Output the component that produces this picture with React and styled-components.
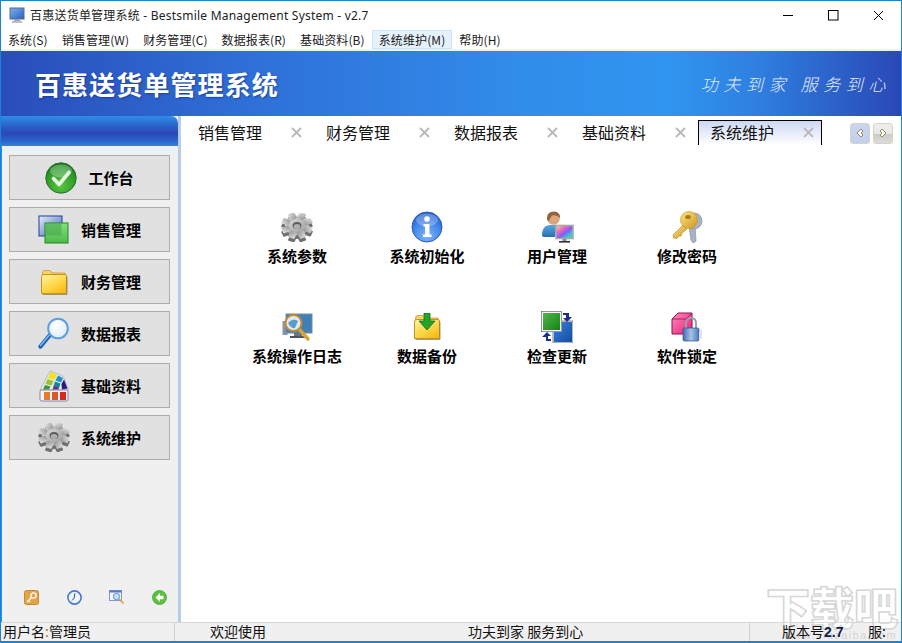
import React from 'react';
import styled, { createGlobalStyle } from 'styled-components';

const CJK = `"Noto Sans CJK SC", "Liberation Sans", sans-serif`;

const Global = createGlobalStyle`
  html, body { margin: 0; padding: 0; background: #fff; }
  body { font-family: ${CJK}; }
  * { box-sizing: border-box; }
`;

const Frame = styled.div`
  position: relative;
  width: 902px;
  height: 643px;
  display: flex;
  flex-direction: column;
  overflow: hidden;
  border: 1px solid #1883d7;
  border-bottom-width: 2px;
  background: #fff;
  color: #000;
`;

const TitleBar = styled.div`
  height: 29px;
  flex: none;
  display: flex;
  align-items: center;
  padding: 0 0 1px 8px;
`;

const TitleText = styled.div`
  margin-left: 4px;
  font-family: "Noto Sans", ${CJK};
  font-size: 12px;
  letter-spacing: 0.22px;
  color: #222;
  white-space: nowrap;
`;

const WinButtons = styled.div`
  margin-left: auto;
  display: flex;
  height: 29px;
`;

const WinButton = styled.div`
  width: 45px;
  display: flex;
  align-items: center;
  justify-content: center;
`;

const MenuBar = styled.div`
  height: 21px;
  flex: none;
  display: flex;
  align-items: center;
  border-bottom: 2px solid #f0f0f0;
`;

const MenuItem = styled.div`
  height: 19px;
  padding: 0 6px;
  font-size: 12px;
  line-height: 18px;
  letter-spacing: 0.1px;
  color: #1a1a1a;
  white-space: nowrap;
  border: 1px solid ${p => (p.$active ? '#cce4f7' : 'transparent')};
  background: ${p => (p.$active ? '#e5f1fb' : 'transparent')};
`;

const Banner = styled.div`
  height: 65px;
  flex: none;
  display: flex;
  align-items: center;
  justify-content: space-between;
  padding: 0 10px 0 34px;
  background: linear-gradient(to right, #2a4db9 0%, #2f70d8 28%, #318cea 58%, #3095f0 74%, #2f7fe0 84%, #2a48b6 100%);
`;

const BannerTitle = styled.div`
  font-size: 26px;
  font-weight: 700;
  letter-spacing: 1.1px;
  color: #fff;
  white-space: nowrap;
  text-shadow: 1px 1px 2px rgba(20, 40, 120, 0.6);
`;

const Slogan = styled.div`
  font-size: 17px;
  font-weight: 300;
  font-style: italic;
  letter-spacing: 5.6px;
  color: #e4edfb;
  white-space: nowrap;
`;

const Body = styled.div`
  flex: 1;
  min-height: 0;
  display: flex;
`;

const Sidebar = styled.div`
  width: 180px;
  flex: none;
  display: flex;
  flex-direction: column;
  background: #f0f0f0;
  border-right: 3px solid #b5cdec;
  border-left: 1px solid #2e8ee6;
`;

const SideHead = styled.div`
  height: 30px;
  flex: none;
  margin-left: -1px;
  border-top-right-radius: 7px;
  background: linear-gradient(to bottom, #2f8de9 0%, #2b5cc4 38%, #2a48b6 58%, #2b62c9 82%, #2f83e3 100%);
`;

const SideButtons = styled.div`
  display: flex;
  flex-direction: column;
  gap: 7px;
  padding: 9px 8px 0 7px;
`;

const SideButton = styled.div`
  height: 45px;
  display: flex;
  align-items: center;
  justify-content: center;
  gap: 11px;
  border: 1px solid #adadad;
  background: #e1e1e1;
  font-size: 15px;
  font-weight: 700;
  color: #000;
`;

const SideIcon = styled.span`
  width: 32px;
  display: flex;
  justify-content: center;
`;

const SideFoot = styled.div`
  margin-top: auto;
  height: 32px;
  padding: 0 0 17px 8px;
  display: grid;
  grid-template-columns: repeat(4, 42.7px);
  justify-items: center;
  align-items: center;
`;

const Main = styled.div`
  flex: 1;
  min-width: 0;
  display: flex;
  flex-direction: column;
`;

const TabStrip = styled.div`
  height: 29px;
  flex: none;
  display: flex;
  align-items: flex-end;
  padding-left: 5px;
`;

const Tab = styled.div`
  width: ${p => p.$w}px;
  height: 25px;
  display: flex;
  align-items: center;
  padding: 0 0 2px 11px;
  font-size: 16px;
  line-height: 22px;
  color: #111;
  border: 1px solid ${p => (p.$active ? '#000' : 'transparent')};
  border-bottom: 0;
  background: ${p => (p.$active ? 'linear-gradient(to bottom, #ccd8f2 0%, #e6ecf9 50%, #fff 100%)' : 'transparent')};
`;

const TabClose = styled.span`
  margin-left: auto;
  margin-right: ${p => p.$mr}px;
  display: flex;
`;

const Scrollers = styled.div`
  margin-left: 28px;
  display: flex;
  gap: 3px;
  align-self: center;
  margin-top: 5px;
`;

const Scroller = styled.div`
  width: 20px;
  height: 21px;
  display: flex;
  align-items: center;
  justify-content: center;
  border: 1px solid #d8d4c0;
  border-radius: 3px;
  background: ${p => (p.$on
    ? 'linear-gradient(to bottom, #c9d6f2, #c2d0ef)'
    : 'linear-gradient(to bottom, #eeeeee 0%, #e8e8e8 50%, #c9c9c9 52%, #dcdcdc 100%)')};
`;

const IconGrid = styled.div`
  display: grid;
  grid-template-columns: repeat(4, 130px);
  grid-auto-rows: 100px;
  padding: 64px 0 0 51px;
`;

const Launcher = styled.div`
  display: flex;
  flex-direction: column;
  align-items: center;
`;

const LauncherIcon = styled.div`
  width: 36px;
  height: 36px;
  display: flex;
  align-items: center;
  justify-content: center;
`;

const LauncherLabel = styled.div`
  margin-top: 1px;
  font-size: 15px;
  line-height: 20px;
  font-weight: 700;
  white-space: nowrap;
`;

const StatusBar = styled.div`
  position: relative;
  z-index: 2;
  height: 19px;
  flex: none;
  display: flex;
  align-items: center;
  background: transparent;
  border-top: 1px solid #d7d7d7;
  font-size: 14px;
  line-height: 17px;
  color: #111;
  white-space: nowrap;
`;

const StatusCell = styled.div`
  width: ${p => p.$w}px;
  flex: none;
  height: 18px;
  padding-left: ${p => p.$pl}px;
  border-right: ${p => (p.$split ? '1px solid #d0d0d0' : '0')};
`;

const StatusBack = styled.div`
  position: absolute;
  left: 0;
  right: 0;
  bottom: 0;
  height: 19px;
  background: #f0f0f0;
`;

const Colon = styled.span`
  color: #d2691e;
`;

const Version = styled.b`
  font-family: "Liberation Sans", sans-serif;
  color: #10204a;
`;

const Watermark = styled.div`
  position: absolute;
  right: 3px;
  bottom: 10px;
  font-size: 44px;
  line-height: 50px;
  font-weight: 900;
  color: #fff;
  -webkit-text-stroke: 1.5px #d6d6d6;
  pointer-events: none;
  white-space: nowrap;
`;

const WatermarkSite = styled.div`
  position: absolute;
  right: 4px;
  bottom: 0;
  font-family: "Liberation Sans", sans-serif;
  font-size: 11px;
  line-height: 12px;
  letter-spacing: 1.4px;
  color: #d4d4d4;
  white-space: nowrap;
`;

function Monitor() {
  return (
    <svg width="17" height="17" viewBox="0 0 17 17">
      <defs>
        <linearGradient id="mon" x1="0" y1="0" x2="1" y2="1">
          <stop offset="0" stopColor="#7fb0ee" />
          <stop offset="1" stopColor="#2a5fc4" />
        </linearGradient>
      </defs>
      <rect x="1" y="1" width="14" height="11" fill="url(#mon)" stroke="#5a6a80" />
      <rect x="5" y="12" width="6" height="2" fill="#9aa4b0" />
      <rect x="3" y="14" width="10" height="2" fill="#b8c0c8" />
    </svg>
  );
}

// flattened cog: darker copy underneath gives the 3d rim
function Gear({ id }) {
  const teeth = [0, 45, 90, 135, 180, 225, 270, 315];
  const shape = (fill, dy) => (
    <g transform={`translate(0 ${dy})`} fill={fill}>
      <ellipse cx="16" cy="12.5" rx="12" ry="10" />
      {teeth.map(a => (
        <rect key={a} x="12.5" y="-1" width="7" height="8" rx="1" transform={`translate(16 12.5) scale(1 0.84) rotate(${a + 22}) translate(-16 -15)`} />
      ))}
    </g>
  );
  return (
    <svg width="32" height="29" viewBox="0 0 32 29">
      <defs>
        <linearGradient id={id} x1="0" y1="0" x2="0.8" y2="1">
          <stop offset="0" stopColor="#e4e4e4" />
          <stop offset="0.6" stopColor="#b8b8b8" />
          <stop offset="1" stopColor="#9a9a9a" />
        </linearGradient>
      </defs>
      {shape('#707070', 3.5)}
      {shape(`url(#${id})`, 0)}
      <ellipse cx="16" cy="12.5" rx="4.4" ry="3.6" fill="#5c5c5c" />
      <ellipse cx="16" cy="13.6" rx="3.4" ry="2.5" fill="#b0b0b0" />
    </svg>
  );
}

function CheckBall() {
  return (
    <svg width="32" height="32" viewBox="0 0 32 32">
      <defs>
        <radialGradient id="chk" cx="0.5" cy="0.75" r="0.75">
          <stop offset="0" stopColor="#58c53e" />
          <stop offset="0.7" stopColor="#2a9a26" />
          <stop offset="1" stopColor="#14701a" />
        </radialGradient>
      </defs>
      <circle cx="16" cy="16" r="15.2" fill="url(#chk)" stroke="#2b6e2f" strokeWidth="1" />
      <ellipse cx="16" cy="9" rx="11" ry="6.5" fill="#fff" opacity="0.28" />
      <path d="M8.5 16.5 L14 22.5 L24 10.5" fill="none" stroke="#e8f4e4" strokeWidth="3.6" strokeLinecap="round" strokeLinejoin="round" />
    </svg>
  );
}

function Windows() {
  return (
    <svg width="32" height="30" viewBox="0 0 32 30">
      <defs>
        <linearGradient id="winA" x1="0" y1="0" x2="1" y2="1">
          <stop offset="0" stopColor="#e8ecf6" />
          <stop offset="1" stopColor="#3d64bd" />
        </linearGradient>
        <linearGradient id="winB" x1="0" y1="0" x2="0" y2="1">
          <stop offset="0" stopColor="#8ade80" />
          <stop offset="1" stopColor="#4db84a" />
        </linearGradient>
      </defs>
      <rect x="1" y="1" width="23" height="20" fill="url(#winA)" stroke="#1c3ea0" />
      <rect x="7" y="8" width="23" height="20" fill="url(#winB)" stroke="#1e8a1e" />
      <rect x="7.5" y="8.5" width="16" height="12" fill="#3fa44c" opacity="0.55" />
    </svg>
  );
}

function Folder({ id, children }) {
  return (
    <svg width="28" height="28" viewBox="0 0 28 28">
      <defs>
        <linearGradient id={id} x1="0" y1="0" x2="0.7" y2="1">
          <stop offset="0" stopColor="#fff2a8" />
          <stop offset="0.6" stopColor="#fed648" />
          <stop offset="1" stopColor="#f6bd1a" />
        </linearGradient>
      </defs>
      <path d="M2.5 5 Q2.5 2.5 5 2.5 L10 2.5 L12 5 L25 5 L25 10 L2.5 10 Z" fill="#f9d463" stroke="#c89a2a" strokeWidth="0.8" />
      <path d="M1.5 8.5 Q1.5 6.5 4 6.5 L25.5 6.5 Q26.5 6.5 26.5 8 L26.5 25.5 L1.5 25.5 Z" fill={`url(#${id})`} stroke="#c4951e" />
      <path d="M2.5 26.5 H27 V9" fill="none" stroke="#8a7440" strokeWidth="1" opacity="0.7" />
      {children}
    </svg>
  );
}

function Magnifier() {
  return (
    <svg width="32" height="33" viewBox="0 0 32 33">
      <defs>
        <radialGradient id="lens" cx="0.4" cy="0.35" r="0.8">
          <stop offset="0" stopColor="#ffffff" />
          <stop offset="1" stopColor="#dbe9f6" />
        </radialGradient>
      </defs>
      <path d="M11.5 18.5 L2.5 29.5" stroke="#1a5cb4" strokeWidth="4.2" strokeLinecap="round" />
      <path d="M11 18.5 L2.5 28.5" stroke="#78bcf4" strokeWidth="1.6" strokeLinecap="round" />
      <circle cx="20" cy="11.5" r="9.8" fill="url(#lens)" stroke="#5aa0e2" strokeWidth="2" />
    </svg>
  );
}

function Palette() {
  return (
    <svg width="30" height="32" viewBox="0 0 30 32">
      <path d="M11 1 L24 6 L29.5 20 L1 20 Z" fill="#e8e8ee" stroke="#a0a0b0" strokeWidth="0.6" />
      <path d="M11.5 2 L18 4.5 L15.5 10 L9 8 Z" fill="#f2e21c" />
      <path d="M8.5 9 L14.5 11 L12.5 15.5 L6.5 14 Z" fill="#9bc42a" />
      <path d="M6 15 L11.5 16.5 L10 19.5 L4 19.5 Z" fill="#3a9a3c" />
      <path d="M19 5.5 L24 8 L22 12.5 L16.5 10.5 Z" fill="#1c92c4" />
      <path d="M16 11.5 L21.5 13.5 L19.5 19.5 L13.5 19.5 Z" fill="#128a96" />
      <path d="M25 9.5 L28.5 18.5 L23 19.5 L22.5 14 Z" fill="#2a1c80" />
      <path d="M15 16 L19.5 17 L18.5 19.5 L14 19.5 Z" fill="#7a2a8c" />
      <rect x="1" y="20" width="28" height="11" rx="1.5" fill="#f4f4f8" stroke="#8a80a0" />
      <rect x="5" y="22" width="6" height="8" fill="#e87a2c" />
      <rect x="13" y="22" width="6" height="8" fill="#d85a28" />
      <rect x="21" y="22" width="6" height="8" fill="#d82820" />
    </svg>
  );
}

function Info() {
  return (
    <svg width="32" height="32" viewBox="0 0 32 32">
      <defs>
        <radialGradient id="inf" cx="0.5" cy="0.8" r="0.85">
          <stop offset="0" stopColor="#7fb8fa" />
          <stop offset="0.6" stopColor="#3d82e8" />
          <stop offset="1" stopColor="#1f52b8" />
        </radialGradient>
      </defs>
      <circle cx="16" cy="16" r="15" fill="url(#inf)" stroke="#2a5cb8" />
      <ellipse cx="16" cy="9" rx="11" ry="6.5" fill="#fff" opacity="0.25" />
      <circle cx="16" cy="8" r="2.8" fill="#fff" />
      <path d="M12.5 13 H18.5 V23.5 H20.5 V26 H12 V23.5 H14 V15.5 H12.5 Z" fill="#fff" />
    </svg>
  );
}

function UserMonitor() {
  return (
    <svg width="33" height="33" viewBox="0 0 33 33">
      <defs>
        <linearGradient id="rainbow" x1="0" y1="0" x2="1" y2="1">
          <stop offset="0" stopColor="#f0ec6a" />
          <stop offset="0.3" stopColor="#f06ac0" />
          <stop offset="0.55" stopColor="#8a5af0" />
          <stop offset="0.75" stopColor="#3ac0e2" />
          <stop offset="1" stopColor="#5ae27a" />
        </linearGradient>
        <linearGradient id="shirt" x1="0" y1="0" x2="0" y2="1">
          <stop offset="0" stopColor="#5ea8dc" />
          <stop offset="1" stopColor="#2470b4" />
        </linearGradient>
      </defs>
      <path d="M1 24 Q1 15 8 14 L19 14 L19 18 L15 19 L14 26 L3 26 Q1 26 1 24 Z" fill="url(#shirt)" />
      <circle cx="12.5" cy="7.5" r="6.3" fill="#dba67e" />
      <path d="M6 7 Q6 0.5 13 0.5 Q19.5 1 19 7 Q16 3.5 11 4.5 Q9 7 8 10 Q6 10 6 7 Z" fill="#94633a" />
      <rect x="15" y="14.5" width="17" height="13" fill="url(#rainbow)" stroke="#a8a8a8" strokeWidth="1.6" />
      <rect x="21.5" y="28" width="4" height="2" fill="#8a8a8a" />
      <rect x="18" y="30" width="11" height="1.6" fill="#333" />
    </svg>
  );
}

function Key() {
  return (
    <svg width="31" height="33" viewBox="0 0 31 33">
      <defs>
        <linearGradient id="gold" x1="0" y1="0" x2="1" y2="1">
          <stop offset="0" stopColor="#fde684" />
          <stop offset="1" stopColor="#d0961c" />
        </linearGradient>
      </defs>
      <g stroke="#8d99a8" fill="#aab4c0">
        <path d="M17 15 L19 29 L21 32 L24 30 L23 15 Z" strokeWidth="0.8" />
        <circle cx="22" cy="10" r="8" strokeWidth="0.8" />
      </g>
      <path d="M11 14 L1 24 L1.5 27 L5 27.5 L7 25 L9 25 L10 22 L15 18 Z" fill="url(#gold)" stroke="#b5851c" strokeWidth="0.6" />
      <circle cx="17" cy="9" r="8.5" fill="url(#gold)" stroke="#c0921f" strokeWidth="0.6" />
      <ellipse cx="16" cy="6" rx="2.8" ry="2" fill="#a87a1c" />
    </svg>
  );
}

function LogSearch() {
  return (
    <svg width="31" height="28" viewBox="0 0 31 28">
      <rect x="0.5" y="8" width="5" height="14" fill="#8a96a8" />
      <rect x="4" y="1" width="26" height="19" fill="#3f80b8" stroke="#7a8a9a" />
      <rect x="12" y="20" width="8" height="3" fill="#6a7480" />
      <rect x="8" y="23" width="15" height="2" fill="#4a5460" />
      <path d="M17 16 L26 26" stroke="#d9a238" strokeWidth="3.4" strokeLinecap="round" />
      <circle cx="11.5" cy="10" r="8" fill="#dfeaf6" stroke="#c98a2a" strokeWidth="2" />
      <path d="M6 10 Q11 4 16 8 L13 15 Q9 16 6 10 Z" fill="#5b9ccc" />
    </svg>
  );
}

function UpdateIcon() {
  return (
    <svg width="32" height="32" viewBox="0 0 32 32">
      <defs>
        <linearGradient id="upG" x1="0" y1="0" x2="1" y2="1">
          <stop offset="0" stopColor="#56b856" />
          <stop offset="1" stopColor="#0d820d" />
        </linearGradient>
        <linearGradient id="upB" x1="0" y1="0" x2="1" y2="1">
          <stop offset="0" stopColor="#3b80d8" />
          <stop offset="1" stopColor="#0f4fa4" />
        </linearGradient>
      </defs>
      <rect x="12.5" y="10.5" width="19" height="21" fill="url(#upB)" stroke="#e8e8e8" />
      <rect x="12" y="10" width="20" height="22" fill="none" stroke="#555" strokeWidth="0.7" />
      <rect x="1" y="1" width="19" height="19" fill="url(#upG)" stroke="#f4f4f4" strokeWidth="2" />
      <rect x="0.3" y="0.3" width="20.4" height="20.4" fill="none" stroke="#555" strokeWidth="0.6" />
      <path d="M22 2 H28 V6 H31 L26 11 L22 7 H25 V4 H22 Z" fill="#1a2f8a" />
      <path d="M10 30 H5 V26 H1 L6 21 L10 25 H7 V28 H10 Z" fill="#1a2f8a" />
    </svg>
  );
}

function LockBox() {
  return (
    <svg width="32" height="30" viewBox="0 0 32 30">
      <defs>
        <linearGradient id="pink" x1="0" y1="0" x2="1" y2="1">
          <stop offset="0" stopColor="#ff8cc0" />
          <stop offset="1" stopColor="#e81c78" />
        </linearGradient>
        <linearGradient id="lockB" x1="0" y1="0" x2="1" y2="0">
          <stop offset="0" stopColor="#3f6cb4" />
          <stop offset="0.5" stopColor="#a8c2e4" />
          <stop offset="1" stopColor="#4a78bc" />
        </linearGradient>
      </defs>
      <path d="M1 7 L7 1 L21 1 L21 16 L15 22 L1 22 Z" fill="url(#pink)" stroke="#8e1244" />
      <path d="M1 7 H15 L21 1 M15 7 V22" fill="none" stroke="#8e1244" strokeWidth="0.8" />
      <path d="M15 17 V11 Q15 6 20 6 Q25 6 25 11 V17" fill="none" stroke="#9aa0aa" strokeWidth="2" />
      <rect x="12" y="16" width="16" height="13" rx="1.5" fill="url(#lockB)" stroke="#2f4f8e" strokeWidth="0.7" />
      <path d="M28 20 L31 17 L31 26 L28 29 Z" fill="#dfe4ea" />
    </svg>
  );
}

function SmallKey() {
  return (
    <svg width="15" height="15" viewBox="0 0 15 15">
      <rect x="0.5" y="0.5" width="14" height="14" rx="2" fill="#e6a544" stroke="#c88a30" />
      <circle cx="9.5" cy="5.5" r="2.6" fill="none" stroke="#fff" strokeWidth="1.3" />
      <path d="M7.5 7.5 L3 12 M4.5 10.5 L6 12" stroke="#fff" strokeWidth="1.3" fill="none" />
    </svg>
  );
}

function SmallClock() {
  return (
    <svg width="15" height="15" viewBox="0 0 15 15">
      <circle cx="7.5" cy="7.5" r="6.6" fill="#eef4fc" stroke="#4a78d0" strokeWidth="1.6" />
      <path d="M7.8 3.5 L7.2 8 L5 10.5" fill="none" stroke="#2a4a9c" strokeWidth="1" />
    </svg>
  );
}

function SmallFind() {
  return (
    <svg width="16" height="15" viewBox="0 0 16 15">
      <rect x="0.5" y="0.5" width="12" height="10" fill="#f4f8fd" stroke="#7a9ad0" />
      <rect x="0.5" y="0.5" width="12" height="2" fill="#4a7ac8" />
      <circle cx="7.5" cy="6.5" r="3.2" fill="#bfe0f8" stroke="#6a94c8" />
      <path d="M10 9 L14.5 13.5" stroke="#d9a238" strokeWidth="1.6" />
    </svg>
  );
}

function SmallBack() {
  return (
    <svg width="15" height="15" viewBox="0 0 15 15">
      <circle cx="7.5" cy="7.5" r="7" fill="#5ac23c" stroke="#3c9e2c" strokeWidth="0.7" />
      <path d="M8 3 L3.5 7.5 L8 12 V9.3 H11.5 V5.7 H8 Z" fill="#fff" />
    </svg>
  );
}

function CloseX({ size = 11, color = '#b9b9b9', width = 1.8 }) {
  return (
    <svg width={size} height={size} viewBox="0 0 11 11">
      <path d="M1 1 L10 10 M10 1 L1 10" stroke={color} strokeWidth={width} />
    </svg>
  );
}

function Chevron({ dir, color }) {
  const d = dir === 'left' ? 'M6 1 L2 5 L6 9 L8 7 L6 5 L8 3 Z' : 'M4 1 L8 5 L4 9 L2 7 L4 5 L2 3 Z';
  return (
    <svg width="10" height="10" viewBox="0 0 10 10">
      <path d={d} fill="#fff" stroke={color} strokeWidth="1" />
    </svg>
  );
}

const menus = [
  ['系统(S)'], ['销售管理(W)'], ['财务管理(C)'], ['数据报表(R)'], ['基础资料(B)'], ['系统维护(M)', true], ['帮助(H)'],
];

const sideItems = [
  ['工作台', <CheckBall />],
  ['销售管理', <Windows />],
  ['财务管理', <Folder id="fold1" />],
  ['数据报表', <Magnifier />],
  ['基础资料', <Palette />],
  ['系统维护', <Gear id="gear1" />],
];

const tabs = ['销售管理', '财务管理', '数据报表', '基础资料'];

const launchers = [
  ['系统参数', <Gear id="gear2" />],
  ['系统初始化', <Info />],
  ['用户管理', <UserMonitor />],
  ['修改密码', <Key />],
  ['系统操作日志', <LogSearch />],
  ['数据备份', (
    <Folder id="fold2">
      <path d="M11 0 H17 V8 H22 L14 17 L6 8 H11 Z" fill="#22a52a" stroke="#146e1c" strokeWidth="0.8" />
    </Folder>
  )],
  ['检查更新', <UpdateIcon />],
  ['软件锁定', <LockBox />],
];

export default function App() {
  return (
    <Frame>
      <Global />
      <TitleBar>
        <Monitor />
        <TitleText>百惠送货单管理系统 - Bestsmile Management System - v2.7</TitleText>
        <WinButtons>
          <WinButton>
            <svg width="11" height="11" viewBox="0 0 11 11"><path d="M0 5.5 H10" stroke="#000" strokeWidth="1" /></svg>
          </WinButton>
          <WinButton>
            <svg width="11" height="11" viewBox="0 0 11 11"><rect x="0.5" y="0.5" width="9.5" height="9.5" fill="none" stroke="#000" /></svg>
          </WinButton>
          <WinButton><CloseX color="#000" width={1} /></WinButton>
        </WinButtons>
      </TitleBar>
      <MenuBar>
        {menus.map(([label, active]) => (
          <MenuItem key={label} $active={active}>{label}</MenuItem>
        ))}
      </MenuBar>
      <Banner>
        <BannerTitle>百惠送货单管理系统</BannerTitle>
        <Slogan>功夫到家 服务到心</Slogan>
      </Banner>
      <Body>
        <Sidebar>
          <SideHead />
          <SideButtons>
            {sideItems.map(([label, icon]) => (
              <SideButton key={label}><SideIcon>{icon}</SideIcon>{label}</SideButton>
            ))}
          </SideButtons>
          <SideFoot>
            <SmallKey />
            <SmallClock />
            <SmallFind />
            <SmallBack />
          </SideFoot>
        </Sidebar>
        <Main>
          <TabStrip>
            {tabs.map(t => (
              <Tab key={t} $w={128}>
                {t}
                <TabClose $mr={11}><CloseX /></TabClose>
              </Tab>
            ))}
            <Tab $active $w={124}>
              系统维护
              <TabClose $mr={7}><CloseX /></TabClose>
            </Tab>
            <Scrollers>
              <Scroller $on><Chevron dir="left" color="#9a8a50" /></Scroller>
              <Scroller><Chevron dir="right" color="#9a8a50" /></Scroller>
            </Scrollers>
          </TabStrip>
          <IconGrid>
            {launchers.map(([label, icon]) => (
              <Launcher key={label}>
                <LauncherIcon>{icon}</LauncherIcon>
                <LauncherLabel>{label}</LauncherLabel>
              </Launcher>
            ))}
          </IconGrid>
        </Main>
      </Body>
      <StatusBack />
      <Watermark>下载吧</Watermark>
      <WatermarkSite>www.xiazaiba.com</WatermarkSite>
      <StatusBar>
        <StatusCell $w={174} $pl={2} $split>用户名<Colon>:</Colon>管理员</StatusCell>
        <StatusCell $w={114} $pl={35}>欢迎使用</StatusCell>
        <StatusCell $w={461} $pl={179} $split>功夫到家 服务到心</StatusCell>
        <StatusCell $w={118} $pl={32}>版本号<Version>2.7</Version></StatusCell>
        <StatusCell $w={17} $pl={0}>服:</StatusCell>
      </StatusBar>
    </Frame>
  );
}
